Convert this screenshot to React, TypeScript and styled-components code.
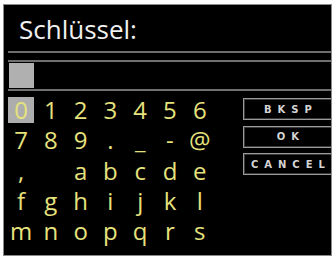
import * as React from 'react';
import styled, {createGlobalStyle} from 'styled-components';

const GlobalStyle = createGlobalStyle`
    html, body {
        margin: 0;
        padding: 0;
        background: #fff;
    }
    * {
        box-sizing: border-box;
    }
`;

const Screen = styled.div`
    margin: 4px 0 0 3px;
    width: 329px;
    height: 252px;
    background: #000;
    border: 1px solid #8a8a8a;
    overflow: hidden;
`;

const Title = styled.div`
    padding: 7px 0 0 15px;
    margin-bottom: 5px;
    height: 41px;
    font-family: "Open Sans", "Liberation Sans", sans-serif;
    font-size: 26px;
    line-height: 34px;
    color: #f0f0f0;
`;

const Divider = styled.div`
    margin-left: 4px;
    height: 2px;
    background: #6e6e6e;
`;

const InputBox = styled.div`
    margin: 7px 0 0 4px;
    height: 31px;
    border-top: 2px solid #707070;
    border-bottom: 2px solid #707070;
    padding: 1px 0 0 1px;
`;

const Cursor = styled.div`
    width: 25px;
    height: 25px;
    background: #b0b0b0;
`;

const Main = styled.div`
    display: flex;
    margin-top: 6px;
`;

const Keys = styled.div`
    display: grid;
    grid-template-columns: repeat(7, 26px);
    grid-auto-rows: 26px;
    column-gap: 3.8px;
    row-gap: 4.3px;
    margin-left: 4px;
`;

const Key = styled.div<{ selected?: boolean }>`
    display: flex;
    justify-content: center;
    font-family: "Open Sans", "Liberation Sans", sans-serif;
    font-size: 24px;
    line-height: 26px;
    color: #e6e27c;
    background: ${(props) => props.selected ? "#adadad" : "transparent"};
`;

const Buttons = styled.div`
    display: flex;
    flex-direction: column;
    gap: 5.5px;
    margin: 1px 0 0 30px;
    flex: 1;
`;

const Btn = styled.div`
    height: 22px;
    margin-right: -2px;
    border: 1px solid #9a9a9a;
    box-shadow: inset 0 0 0 1px #3a3a3a;
    display: flex;
    align-items: center;
    justify-content: center;
    padding-left: 6px;
    font-family: "DejaVu Sans", "Liberation Sans", sans-serif;
    font-weight: bold;
    font-size: 10px;
    letter-spacing: 6px;
    color: #d4d4d4;
`;

const rows = [
    ["0", "1", "2", "3", "4", "5", "6"],
    ["7", "8", "9", ".", "_", "-", "@"],
    [",", "", "a", "b", "c", "d", "e"],
    ["f", "g", "h", "i", "j", "k", "l"],
    ["m", "n", "o", "p", "q", "r", "s"],
];

export default function App() {
    return (
        <>
            <GlobalStyle/>
            <Screen>
                <Title>Schlüssel:</Title>
                <Divider/>
                <InputBox>
                    <Cursor/>
                </InputBox>
                <Main>
                    <Keys>
                        {rows.flat().map((ch, i) => (
                            <Key key={i} selected={i === 0}>{ch}</Key>
                        ))}
                    </Keys>
                    <Buttons>
                        <Btn>BKSP</Btn>
                        <Btn>OK</Btn>
                        <Btn>CANCEL</Btn>
                    </Buttons>
                </Main>
            </Screen>
        </>
    )
}
